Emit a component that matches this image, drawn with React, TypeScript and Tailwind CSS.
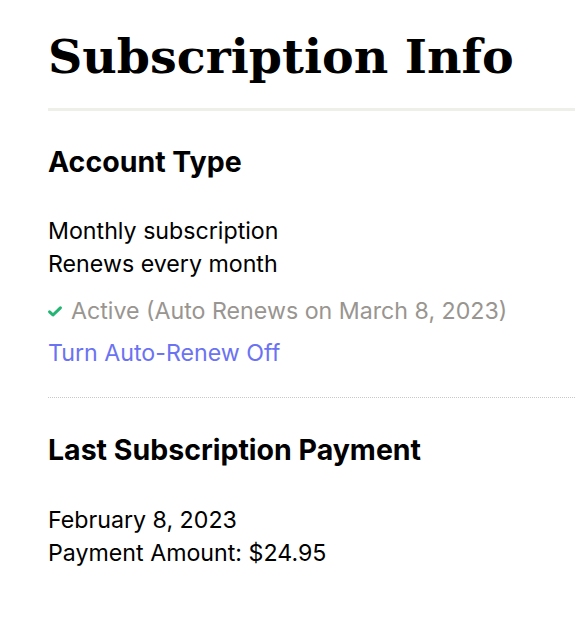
export default function App() {
  return (
    <div className="min-h-screen bg-white pl-12 pt-[18px] font-['Inter',sans-serif] text-black">
      <h1 className="font-['DejaVu_Serif',serif] text-[47.5px] font-bold leading-[76px]">
        Subscription Info
      </h1>
      <div className="mt-[14px] h-[3px] bg-[#efefe9]" />

      <section className="pt-[34px]">
        <h2 className="text-[28.5px] font-bold leading-[34px]">Account Type</h2>
        <div className="mt-[36px] text-[23.2px] leading-[33px]">
          <p>Monthly subscription</p>
          <p>Renews every month</p>
        </div>
        <p className="mt-[14px] flex items-center gap-[9px] text-[23.2px] leading-[33px] text-[#999590]">
          <svg viewBox="0 0 14 11" className="h-[11px] w-[14px]" fill="none">
            <path d="M1.6 5.8 5 9 12.4 1.8" stroke="#22b573" strokeWidth="3" strokeLinecap="round" strokeLinejoin="round" />
          </svg>
          Active (Auto Renews on March 8, 2023)
        </p>
        <a href="#" className="mt-[9px] block text-[23.2px] leading-[33px] text-[#6b73f2]">
          Turn Auto-Renew Off
        </a>
      </section>

      <div className="mt-[27px] border-t border-dotted border-[#c8c8c8]" />

      <section className="pt-[35px]">
        <h2 className="text-[28.5px] font-bold leading-[34px]">Last Subscription Payment</h2>
        <div className="mt-[37px] text-[23.2px] leading-[33px]">
          <p>February 8, 2023</p>
          <p>Payment Amount: $24.95</p>
        </div>
      </section>
    </div>
  );
}
